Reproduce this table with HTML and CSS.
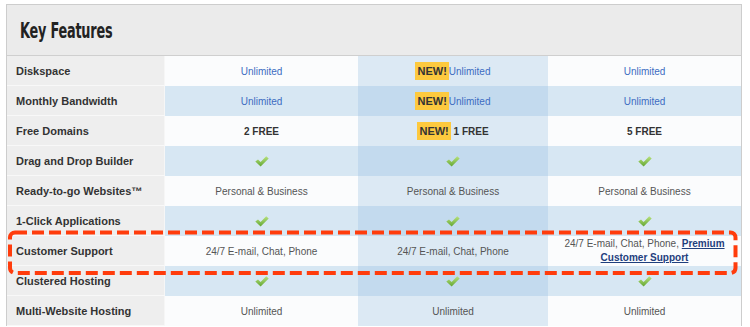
FILE: index.html
```html
<!DOCTYPE html>
<html lang="en">
<head>
    <meta charset="UTF-8">
    <meta name="viewport" content="width=device-width, initial-scale=1.0">
    <title>Key Features</title>
    <link rel="stylesheet" href="styles.css">
</head>
<body>
    <div class="features">
        <div class="features-head">
            <h2>Key Features</h2>
        </div>
        <table class="plan-table">
            <colgroup>
                <col class="col-label">
                <col class="col-plan">
                <col class="col-mid">
                <col class="col-plan">
            </colgroup>
            <tr class="row-light">
                <th>Diskspace</th>
                <td class="val-link">Unlimited</td>
                <td class="hl val-link"><span class="badge-new">NEW!</span>Unlimited</td>
                <td class="val-link">Unlimited</td>
            </tr>
            <tr class="row-blue">
                <th>Monthly Bandwidth</th>
                <td class="val-link">Unlimited</td>
                <td class="hl val-link"><span class="badge-new">NEW!</span>Unlimited</td>
                <td class="val-link">Unlimited</td>
            </tr>
            <tr class="row-light">
                <th>Free Domains</th>
                <td class="val-bold">2 FREE</td>
                <td class="hl val-bold"><span class="badge-new">NEW!</span> 1 FREE</td>
                <td class="val-bold">5 FREE</td>
            </tr>
            <tr class="row-blue">
                <th>Drag and Drop Builder</th>
                <td><svg class="check" viewBox="0 0 14 11"><use href="#tick"/></svg></td>
                <td class="hl"><svg class="check" viewBox="0 0 14 11"><use href="#tick"/></svg></td>
                <td><svg class="check" viewBox="0 0 14 11"><use href="#tick"/></svg></td>
            </tr>
            <tr class="row-light">
                <th>Ready-to-go Websites™</th>
                <td>Personal &amp; Business</td>
                <td class="hl">Personal &amp; Business</td>
                <td>Personal &amp; Business</td>
            </tr>
            <tr class="row-blue">
                <th>1-Click Applications</th>
                <td><svg class="check" viewBox="0 0 14 11"><use href="#tick"/></svg></td>
                <td class="hl"><svg class="check" viewBox="0 0 14 11"><use href="#tick"/></svg></td>
                <td><svg class="check" viewBox="0 0 14 11"><use href="#tick"/></svg></td>
            </tr>
            <tr class="row-light">
                <th>Customer Support</th>
                <td>24/7 E-mail, Chat, Phone</td>
                <td class="hl">24/7 E-mail, Chat, Phone</td>
                <td class="two-line">
                    <span class="line">24/7 E-mail, Chat, Phone, <a href="#" class="premium">Premium</a></span>
                    <span class="line"><a href="#" class="premium">Customer Support</a></span>
                </td>
            </tr>
            <tr class="row-blue">
                <th>Clustered Hosting</th>
                <td><svg class="check" viewBox="0 0 14 11"><use href="#tick"/></svg></td>
                <td class="hl"><svg class="check" viewBox="0 0 14 11"><use href="#tick"/></svg></td>
                <td><svg class="check" viewBox="0 0 14 11"><use href="#tick"/></svg></td>
            </tr>
            <tr class="row-light">
                <th>Multi-Website Hosting</th>
                <td>Unlimited</td>
                <td class="hl">Unlimited</td>
                <td>Unlimited</td>
            </tr>
        </table>

        <!-- red dashed highlight around the support row -->
        <svg class="callout" width="730" height="46" viewBox="0 0 730 46">
            <rect x="2" y="2.5" width="725.5" height="40.5" rx="5" ry="5"
                  fill="none" stroke="#ff3c0c" stroke-width="4" stroke-dasharray="12 5"/>
        </svg>
    </div>

    <svg width="0" height="0" class="defs">
        <defs>
            <linearGradient id="tickGrad" x1="0" y1="0" x2="0" y2="1">
                <stop offset="0" stop-color="#b9e27f"/>
                <stop offset="1" stop-color="#62a630"/>
            </linearGradient>
            <path id="tick" d="M0.3 5.6 L3 3.4 L5.6 5.9 L11.2 0.3 L13.7 2.4 L5.6 10.6 Z" fill="url(#tickGrad)"/>
        </defs>
    </svg>
</body>
</html>
```

FILE: styles.css
```css
body {
    margin: 0;
    background: #fff;
    font-family: 'Liberation Sans', Arial, sans-serif;
}

.features {
    position: relative;
    width: 734px;
    margin: 4px 0 0 6px;
    border: 1px solid #cdcdcd;
    border-bottom: none;
}

.features-head {
    height: 50px;
    background-color: #ebebeb;
    border-bottom: 1px solid #cfcfcf;
    display: flex;
    align-items: center;
    padding-left: 13px;
}

.features-head h2 {
    margin: 1px 0 0;
    font-family: 'DejaVu Sans Condensed', sans-serif;
    font-size: 21px;
    font-weight: bold;
    color: #222;
    letter-spacing: -0.3px;
    transform: scaleX(0.68);
    transform-origin: left center;
}

.plan-table {
    width: 734px;
    table-layout: fixed;
    border-collapse: collapse;
    border-spacing: 0;
}

.col-label { width: 158px; }
.col-plan { width: 193px; }
.col-mid { width: 190px; }

.plan-table tr {
    height: 30px;
}

.plan-table th {
    padding: 0 0 0 9px;
    text-align: left;
    font-size: 11px;
    font-weight: bold;
    color: #333;
    background-color: #eeeeee;
    box-shadow: inset 0 -1px #f8f8f8, inset -1px 0 #f6f6f6;
    white-space: nowrap;
}

.plan-table td {
    padding: 0;
    text-align: center;
    font-size: 10px;
    color: #555;
    vertical-align: middle;
}

.row-light td { background-color: #fbfcfd; }
.row-blue td { background-color: #d7e7f3; }
.row-light td.hl { background-color: #dce9f4; }
.row-blue td.hl { background-color: #c3daee; }

.val-link {
    color: #3d6cc2 !important;
}

.val-bold {
    font-weight: bold;
    color: #333 !important;
}

.badge-new {
    display: inline-block;
    background-color: #fdc93e;
    color: #333;
    font-weight: bold;
    font-size: 11px;
    line-height: 18px;
    padding: 0 2px;
}

.check {
    display: block;
    width: 14px;
    height: 11px;
    margin: 0 auto;
}

.two-line {
    line-height: 14px;
    padding: 0 4px !important;
}

.two-line .line {
    display: block;
}

.premium {
    color: #1f3f7d;
    font-weight: bold;
    text-decoration: underline;
}

.callout {
    position: absolute;
    left: 1px;
    top: 225px;
    pointer-events: none;
}

.defs {
    position: absolute;
}
```
